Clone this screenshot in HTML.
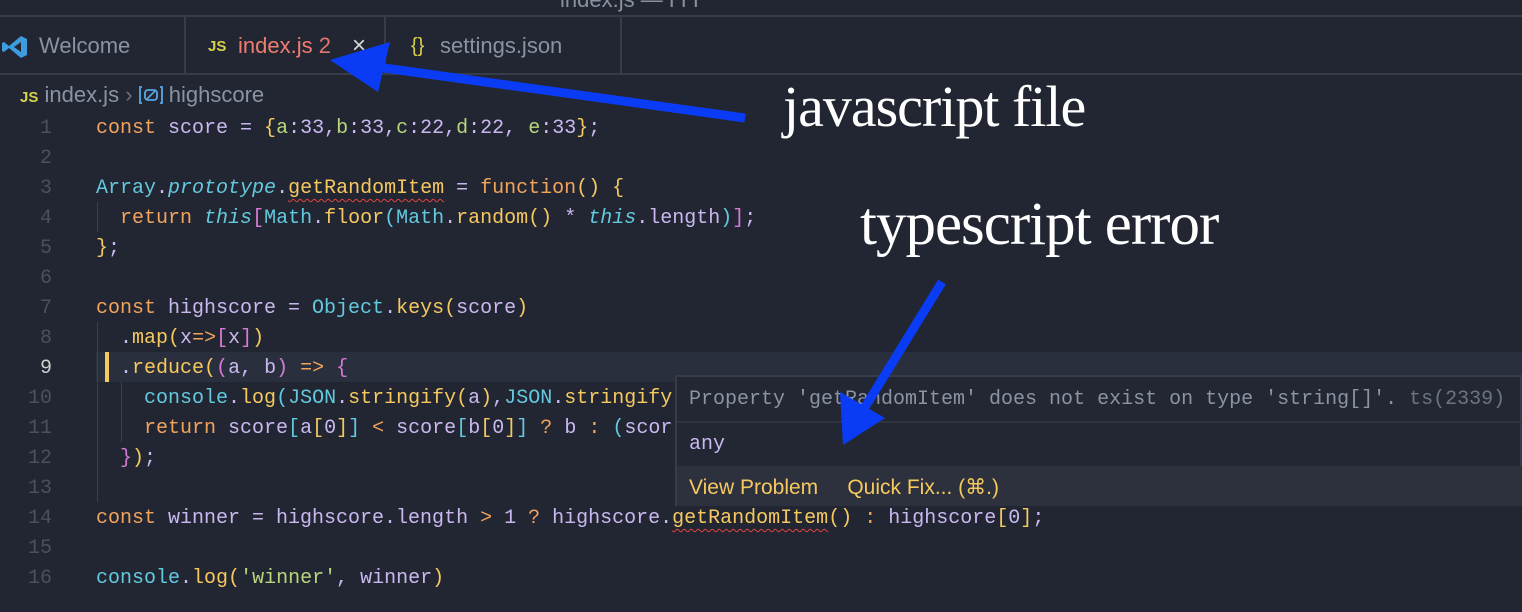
<!DOCTYPE html>
<html><head><meta charset="utf-8">
<style>
*{margin:0;padding:0;box-sizing:border-box}
html,body{width:1522px;height:612px;overflow:hidden}
body{background:#222632;position:relative;font-family:"Liberation Sans",sans-serif}
.title{position:absolute;left:0;top:0;width:1522px;height:17px;background:#222632;border-bottom:2px solid #363c49;overflow:hidden}
.title span{position:absolute;left:560px;top:-13px;color:#8a91a0;font-size:22px}
.tabs{position:absolute;left:0;top:17px;width:1522px;height:58px;background:#222632;border-bottom:2px solid #363c49}
.tab{position:absolute;top:0;height:56px;border-right:2px solid #363c49;font-size:22px;color:#8a93a3;line-height:58px}
.js{font-weight:bold;color:#d7d14a;font-size:15px}
.code{position:absolute;left:0;top:114px;font-family:"Liberation Mono",monospace;font-size:20px;line-height:30px;white-space:pre}
.ln{position:absolute;left:0;width:52px;text-align:right;color:#4a505e}
.line{position:absolute;left:96px;color:#c9b8ef}
.k{color:#f2a35c}.v{color:#c9b8ef}.b{color:#62c9de}.f{color:#f6c95f}.s{color:#b8d67c}.y{color:#f6c95f}.m{color:#d77ad6}.i{font-style:italic;color:#62c9de}
.sq{text-decoration:underline wavy #e0443e;text-underline-offset:5px;text-decoration-thickness:1px}
.guide{position:absolute;width:1px;background:#3a404c}
</style></head><body>
<div class="title"><span>index.js — ΓΓΓ</span></div>
<div class="tabs">
 <div class="tab" style="left:0;width:186px">
  <svg style="position:absolute;left:2px;top:18px" width="26" height="24" viewBox="0 0 26 24"><path d="M19 1 L25 4 V20 L19 23 L7 13 L2 17 L0 16 V8 L2 7 L7 11 Z M19 7 L12 12 L19 17 Z" fill="#3d9be0"/></svg>
  <span style="position:absolute;left:39px">Welcome</span></div>
 <div class="tab" style="left:186px;width:200px">
  <span class="js" style="position:absolute;left:22px;top:1px">JS</span>
  <span style="position:absolute;left:52px;color:#ef7d6f">index.js <span style="color:#e0786b">2</span></span>
  <span style="position:absolute;left:166px;color:#d8d8d8;font-size:24px">×</span></div>
 <div class="tab" style="left:386px;width:236px">
  <span style="position:absolute;left:25px;color:#d7d14a;font-size:20px">{}</span>
  <span style="position:absolute;left:54px">settings.json</span></div>
</div>
<div style="position:absolute;left:20px;top:81px;font-size:22px;color:#8a93a3;line-height:28px;white-space:nowrap">
 <span class="js">JS</span> index.js <span style="color:#6b7280">›</span> <svg width="24" height="20" viewBox="0 0 24 20" style="vertical-align:-3px"><path d="M3 2 H1 V18 H3 M21 2 H23 V18 H21" stroke="#5aa7e6" stroke-width="1.8" fill="none"/><rect x="6" y="5" width="12" height="10" rx="3" stroke="#5aa7e6" stroke-width="1.8" fill="none"/><path d="M8 14 L16 6" stroke="#5aa7e6" stroke-width="1.6"/></svg> highscore</div>

<div style="position:absolute;left:96px;top:352px;width:1426px;height:30px;background:#292f3c"></div>
<div style="position:absolute;left:105px;top:352px;width:4px;height:30px;background:#f6c95f"></div>
<div class="guide" style="left:97px;top:202px;height:30px"></div>
<div class="guide" style="left:97px;top:322px;height:180px"></div>
<div class="guide" style="left:121px;top:382px;height:60px"></div>

<div class="code">
<div class="ln" style="top:0">1</div><div class="line" style="top:0"><span class="k">const</span> score = <span class="y">{</span><span class="s">a</span>:33,<span class="s">b</span>:33,<span class="s">c</span>:22,<span class="s">d</span>:22, <span class="s">e</span>:33<span class="y">}</span>;</div>
<div class="ln" style="top:30px">2</div>
<div class="ln" style="top:60px">3</div><div class="line" style="top:60px"><span class="b">Array</span>.<span class="i">prototype</span>.<span class="f sq">getRandomItem</span> = <span class="k">function</span><span class="y">()</span> <span class="y">{</span></div>
<div class="ln" style="top:90px">4</div><div class="line" style="top:90px">  <span class="k">return</span> <span class="i">this</span><span class="m">[</span><span class="b">Math</span>.<span class="f">floor</span><span class="b">(Math</span>.<span class="f">random</span><span class="y">()</span> * <span class="i">this</span>.length<span class="b">)</span><span class="m">]</span>;</div>
<div class="ln" style="top:120px">5</div><div class="line" style="top:120px"><span class="y">}</span>;</div>
<div class="ln" style="top:150px">6</div>
<div class="ln" style="top:180px">7</div><div class="line" style="top:180px"><span class="k">const</span> highscore = <span class="b">Object</span>.<span class="f">keys</span><span class="y">(</span>score<span class="y">)</span></div>
<div class="ln" style="top:210px">8</div><div class="line" style="top:210px">  .<span class="f">map</span><span class="y">(</span>x<span class="k">=></span><span class="m">[</span>x<span class="m">]</span><span class="y">)</span></div>
<div class="ln" style="top:240px;color:#d0d0d0">9</div><div class="line" style="top:240px">  .<span class="f">reduce</span><span class="y">(</span><span class="m">(</span>a, b<span class="m">)</span> <span class="k">=></span> <span class="m">{</span></div>
<div class="ln" style="top:270px">10</div><div class="line" style="top:270px">    <span class="b">console</span>.<span class="f">log</span><span class="b">(JSON</span>.<span class="f">stringify</span><span class="y">(</span>a<span class="y">)</span>,<span class="b">JSON</span>.<span class="f">stringify</span></div>
<div class="ln" style="top:300px">11</div><div class="line" style="top:300px">    <span class="k">return</span> score<span class="b">[</span>a<span class="y">[</span>0<span class="y">]</span><span class="b">]</span> <span class="k">&lt;</span> score<span class="b">[</span>b<span class="y">[</span>0<span class="y">]</span><span class="b">]</span> <span class="k">?</span> b <span class="k">:</span> <span class="b">(</span>scor</div>
<div class="ln" style="top:330px">12</div><div class="line" style="top:330px">  <span class="m">}</span><span class="y">)</span>;</div>
<div class="ln" style="top:360px">13</div>
<div class="ln" style="top:390px">14</div><div class="line" style="top:390px"><span class="k">const</span> winner = highscore.length <span class="k">&gt;</span> 1 <span class="k">?</span> highscore.<span class="f sq">getRandomItem</span><span class="y">()</span> <span class="k">:</span> highscore<span class="y">[</span>0<span class="y">]</span>;</div>
<div class="ln" style="top:420px">15</div>
<div class="ln" style="top:450px">16</div><div class="line" style="top:450px"><span class="b">console</span>.<span class="f">log</span><span class="y">(</span><span class="s">'winner'</span>, winner<span class="y">)</span></div>
</div>

<div style="position:absolute;left:675px;top:375px;width:847px;height:131px;background:#232733;border:2px solid #363c49;font-family:'Liberation Mono',monospace;font-size:20px">
 <div style="position:absolute;left:12px;top:11px;color:#8c93a2;white-space:pre">Property 'getRandomItem' does not exist on type 'string[]'. <span style="color:#6c7382">ts(2339)</span></div>
 <div style="position:absolute;left:0;top:44px;width:845px;height:2px;background:#2f3440"></div>
 <div style="position:absolute;left:12px;top:56px;color:#c9b8ef">any</div>
 <div style="position:absolute;left:0;top:89px;width:845px;height:40px;background:#2c313d"></div>
 <div style="position:absolute;left:12px;top:98px;color:#f6c95f;font-family:'Liberation Sans',sans-serif;font-size:21px;white-space:pre">View Problem     Quick Fix... (⌘.)</div>
</div>

<div style="position:absolute;left:783px;top:72px;color:#fff;font-family:'Liberation Serif',serif;font-size:58px;letter-spacing:-1px;white-space:nowrap;line-height:70px">javascript file</div>
<div style="position:absolute;left:860px;top:190px;color:#fff;font-family:'Liberation Serif',serif;font-size:61px;letter-spacing:-1px;white-space:nowrap;line-height:70px">typescript error</div>

<svg style="position:absolute;left:0;top:0" width="1522" height="612">
 <line x1="745" y1="118" x2="370" y2="66" stroke="#0a3cf5" stroke-width="9"/>
 <polygon points="330,60 390,42 378,92" fill="#0a3cf5"/>
 <line x1="942" y1="282" x2="862" y2="412" stroke="#0a3cf5" stroke-width="9"/>
 <polygon points="843,445 840,392 885,418" fill="#0a3cf5"/>
</svg>
</body></html>
